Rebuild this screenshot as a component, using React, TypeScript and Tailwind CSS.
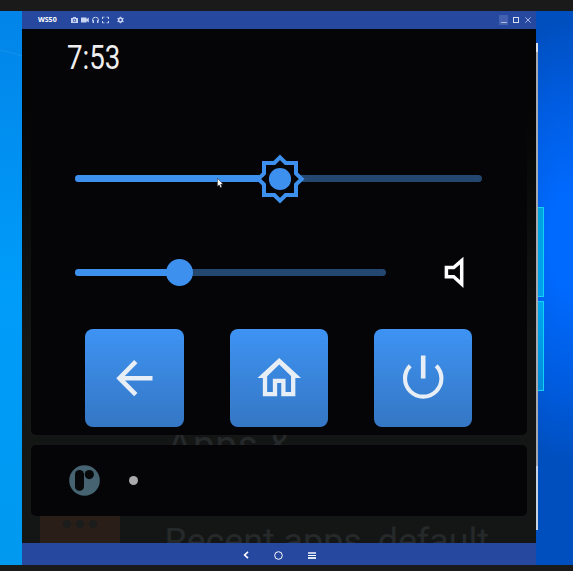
import React from "react";

function TitleBar() {
  return (
    <div className="flex h-[18px] shrink-0 items-center bg-[#26489f] pl-[16px] pr-[5px] text-[#c9d4f3]">
      <span className="w-[33px] font-['Open_Sans',sans-serif] text-[7px] leading-[16px] font-bold text-white">WS50</span>
      <div className="flex -translate-y-[0.5px] items-center gap-[3px]">
        <svg className="h-[7px] w-[7px]" viewBox="0 0 7 7" fill="currentColor">
          <path fillRule="evenodd" d="M0 1.4h1.7L2.3.6h2.4l.6.8H7v5H0zM3.5 2.2a1.7 1.7 0 1 0 0 3.4 1.7 1.7 0 0 0 0-3.4z" />
          <circle cx="3.5" cy="3.9" r="1" />
        </svg>
        <svg className="h-[7px] w-[8px]" viewBox="0 0 8 7" fill="currentColor">
          <path d="M0 1h5.6v1.7L7.8 1v5L5.6 4.4V6H0z" />
        </svg>
        <svg className="h-[7px] w-[7px]" viewBox="0 0 7 7" fill="none" stroke="currentColor">
          <path d="M.6 4.5V3.4a2.9 2.7 0 0 1 5.8 0v1.1" />
          <path d="M1.3 3.8v2.6M5.7 3.8v2.6" strokeWidth="1.5" />
        </svg>
        <svg className="h-[7px] w-[7px]" viewBox="0 0 7 7" fill="none" stroke="currentColor">
          <path d="M.5 2.5v-2h2M4.5.5h2v2M6.5 4.5v2h-2M2.5 6.5h-2v-2" />
        </svg>
      </div>
      <svg className="ml-[7.5px] h-[7px] w-[7px] -translate-y-[0.5px]" viewBox="0 0 7 7" fill="none" stroke="currentColor">
        <circle cx="3.5" cy="3.5" r="1.9" strokeWidth="1.5" />
        <path d="M3.5 0v1.3M3.5 5.7V7M.5 1.7l1 .6M5.5 4.7l1 .6M.5 5.3l1-.6M5.5 2.3l1-.6" strokeWidth="1.3" />
      </svg>
      <div className="ml-auto flex items-center">
        <span className="flex h-[10px] w-[9px] items-end justify-center bg-[#4460b0] pb-[2px]">
          <span className="h-px w-[6px] bg-[#b0bcdf]" />
        </span>
        <span className="ml-[5px] h-[6px] w-[6px] border border-[#d5ddf5]" />
        <svg className="ml-[6px] h-[6px] w-[6px]" viewBox="0 0 6 6" fill="none" stroke="#a8b7e2">
          <path d="M.3.3l5.4 5.4M5.7.3L.3 5.7" />
        </svg>
      </div>
    </div>
  );
}

function BrightnessSlider() {
  return (
    <div className="relative ml-[44px] mt-[78.5px] flex h-[50px] w-[407px] items-center">
      <div className="h-[6.5px] w-full overflow-hidden rounded-full bg-[#23476f]">
        <div className="h-full w-[50%] bg-[#3d90ed]" />
      </div>
      <svg className="absolute left-[179.7px] top-0 h-[50px] w-[50px]" viewBox="-25 -25 50 50">
        <path
          d="M0-21.7L5.7-16H16V-5.7L21.7 0L16 5.7V16H5.7L0 21.7L-5.7 16H-16V5.7L-21.7 0L-16-5.7V-16H-5.7Z"
          fill="#050407"
          stroke="#3d90ed"
          strokeWidth="4"
        />
        <circle r="11.1" fill="#3d90ed" />
      </svg>
      <svg className="absolute left-[142px] top-[24px] h-[11px] w-[8px]" viewBox="0 0 8 11">
        <path d="M.4.3v8.3l1.8-1.7 1.3 2.9 1.5-.7L3.7 6.3h2.5z" fill="#fff" stroke="#111" strokeWidth=".5" />
      </svg>
    </div>
  );
}

function VolumeRow() {
  return (
    <div className="ml-[44px] mt-[51.8px] flex h-[34px] items-center">
      <div className="relative flex h-full w-[311px] items-center">
        <div className="h-[6.5px] w-full overflow-hidden rounded-full bg-[#23476f]">
          <div className="h-full w-[33%] bg-[#3d90ed]" />
        </div>
        <div className="absolute left-[91px] top-[3.7px] h-[26.6px] w-[26.6px] rounded-full bg-[#3d90ed]" />
      </div>
      <svg className="ml-[57px] h-[34px] w-[22px]" viewBox="443 255.3 22 34">
        <path d="M446.4 267.8h7.3l8-6.9v23.4l-8-7.2h-7.3z" fill="none" stroke="#fff" strokeWidth="3.5" />
      </svg>
    </div>
  );
}

function ActionButton({ children }: { children: React.ReactNode }) {
  return (
    <button className="h-[98.5px] w-[98.5px] rounded-[8px] bg-linear-to-b from-[#3e93f3] to-[#3477c4]">
      <svg className="h-full w-full" viewBox="0 0 98.5 98.5" fill="none" stroke="#e8eef5" strokeWidth="4.6">
        {children}
      </svg>
    </button>
  );
}

function ControlPanel() {
  return (
    <section className="ml-[9px] flex h-[406px] w-[496px] shrink-0 flex-col rounded-b-[5px] bg-[#050407]">
      <div className="ml-[36px] mt-[9px] h-[37px] w-[70px] origin-left scale-x-[.84] font-['Roboto',sans-serif] text-[33px] leading-[40px] text-[#eeeeee]">
        7:53
      </div>
      <BrightnessSlider />
      <VolumeRow />
      <div className="ml-[54.3px] mt-[39.3px] flex gap-[45.8px]">
        <ActionButton>
          <path d="M67.5 49.2H35M50.8 32.7L34.5 49.2L50.8 65.7" />
        </ActionButton>
        <ActionButton>
          <path d="M35 44.5V65.2H45V51.8H53.4V65.2H63.2V44.5" strokeWidth="4.3" />
          <path d="M27.5 49L49.2 29L71 49H63L49.2 35.5L35.4 49Z" fill="#e8eef5" stroke="none" />
        </ActionButton>
        <ActionButton>
          <path d="M49.2 26.5V49.5" />
          <path d="M36.2 36.7A18.2 18.2 0 1 0 62.2 36.7" strokeWidth="4.1" />
        </ActionButton>
      </div>
    </section>
  );
}

function AppBar() {
  return (
    <section className="ml-[9px] flex h-[71px] w-[496px] shrink-0 items-center rounded-[5px] bg-[#050407] pl-[37.5px]">
      <svg className="h-[31px] w-[31px]" viewBox="0 0 31 31">
        <circle cx="15.5" cy="15.5" r="15.3" fill="#456370" />
        <rect x="6" y="5" width="9" height="20.7" rx="4.3" fill="#07080a" />
        <circle cx="20.3" cy="9.6" r="4.6" fill="#07080a" />
      </svg>
      <span className="ml-[29px] h-[9.5px] w-[9.5px] rounded-full bg-[#aaaaaa]" />
    </section>
  );
}

function DeviceScreen() {
  return (
    <main className="flex h-[514px] shrink-0 flex-col overflow-hidden bg-linear-to-b from-[#050505] from-15% to-[#141616] to-60% font-['Roboto',sans-serif] text-[36px] leading-[42px] text-[#26292a]">
      <ControlPanel />
      <div className="h-[10px] shrink-0 overflow-hidden pl-[145px] whitespace-nowrap">
        <div className="-mt-[11px] text-[38.5px] tracking-[0.8px]">Apps &amp;</div>
      </div>
      <AppBar />
      <div className="flex h-[27px] shrink-0 overflow-hidden pl-[18px]">
        <div className="flex h-[27px] w-[80px] justify-center gap-[5px] bg-[#2a1e18] pt-[4px]">
          <span className="h-[8px] w-[8px] rounded-full bg-[#1b1c1c]" />
          <span className="h-[8px] w-[8px] rounded-full bg-[#1b1c1c]" />
          <span className="h-[8px] w-[8px] rounded-full bg-[#1b1c1c]" />
        </div>
        <div className="ml-[44.5px] mt-[4px] text-[35.8px] whitespace-nowrap">Recent apps, default</div>
      </div>
    </main>
  );
}

function NavBar() {
  return (
    <nav className="flex h-[22px] shrink-0 items-center bg-[#26489f] pl-[220.5px] pt-[2px]">
      <svg className="h-[8px] w-[6px]" viewBox="0 0 6 8" fill="none" stroke="#fff" strokeWidth="1.6">
        <path d="M5 .8L1.6 4L5 7.2" />
      </svg>
      <svg className="ml-[25.5px] h-[9px] w-[9px]" viewBox="0 0 9 9" fill="none" stroke="#fff">
        <circle cx="4.5" cy="4.5" r="3.8" />
      </svg>
      <div className="ml-[25px] flex w-[8px] flex-col gap-px">
        <span className="h-[2px] bg-[#c0cae8]" />
        <span className="h-px bg-white" />
        <span className="h-[2px] bg-[#e0e5f4]" />
      </div>
    </nav>
  );
}

function WallpaperRight() {
  return (
    <div className="flex w-[37px] shrink-0 bg-[radial-gradient(ellipse_80px_220px_at_30px_230px,#006aff_20%,#005ce0_65%,#004fbf)]">
      <div className="mt-[32px] flex h-[487px] w-[2px] flex-col bg-[#a5a8ac]">
        <span className="h-[9px] bg-[#dadfe6]" />
        <span className="mt-auto h-[64px] bg-[#c8d3e2]" />
      </div>
      <div className="mt-[196px] flex w-[6px] flex-col gap-[4px]">
        <div className="h-[90px] border-y border-r border-[#13d0f5] bg-linear-to-b from-[#00a4df] to-[#009ff0]" />
        <div className="h-[90px] border-y border-r border-[#13d0f5] bg-linear-to-b from-[#00a7f0] to-[#008bdc]" />
      </div>
    </div>
  );
}

export default function App() {
  return (
    <div className="flex h-[571px] w-[573px] flex-col overflow-hidden bg-[#1a1a1a]">
      <div className="h-[11px] shrink-0" />
      <div className="flex h-[554px] shrink-0">
        <div className="w-[22px] shrink-0 bg-linear-to-b from-[#0284e8] via-[#009cfa] via-50% to-[#0099ef]">
          <svg className="h-[60px] w-full" viewBox="0 0 22 60" fill="none">
            <path d="M0 39Q10 41 22 45" stroke="#1d99ee" strokeOpacity=".7" />
          </svg>
        </div>
        <div className="flex w-[514px] shrink-0 flex-col">
          <TitleBar />
          <DeviceScreen />
          <NavBar />
        </div>
        <WallpaperRight />
      </div>
      <div className="h-[6px] shrink-0" />
    </div>
  );
}
